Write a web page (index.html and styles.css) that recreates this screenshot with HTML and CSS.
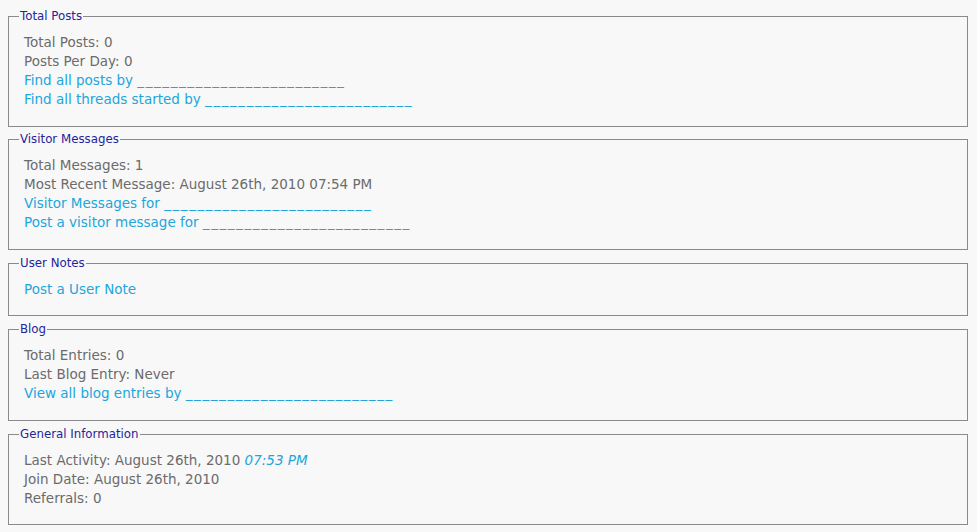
FILE: index.html
```html
<!DOCTYPE html>
<html>
<head>
<meta charset="utf-8">
<link rel="stylesheet" href="styles.css">
</head>
<body>
<div class="profile">
  <fieldset class="block">
    <legend>Total Posts</legend>
    <ul class="stats">
      <li><span class="label">Total Posts:</span> 0</li>
      <li><span class="label">Posts Per Day:</span> 0</li>
      <li><a href="#">Find all posts by <span class="blank">_________________________</span></a></li>
      <li><a href="#">Find all threads started by <span class="blank">_________________________</span></a></li>
    </ul>
  </fieldset>
  <fieldset class="block">
    <legend>Visitor Messages</legend>
    <ul class="stats">
      <li><span class="label">Total Messages:</span> 1</li>
      <li><span class="label">Most Recent Message:</span> August 26th, 2010 07:54 PM</li>
      <li><a href="#">Visitor Messages for <span class="blank">_________________________</span></a></li>
      <li><a href="#">Post a visitor message for <span class="blank">_________________________</span></a></li>
    </ul>
  </fieldset>
  <fieldset class="block">
    <legend>User Notes</legend>
    <ul class="stats">
      <li><a href="#">Post a User Note</a></li>
    </ul>
  </fieldset>
  <fieldset class="block">
    <legend>Blog</legend>
    <ul class="stats">
      <li><span class="label">Total Entries:</span> 0</li>
      <li><span class="label">Last Blog Entry:</span> Never</li>
      <li><a href="#">View all blog entries by <span class="blank">_________________________</span></a></li>
    </ul>
  </fieldset>
  <fieldset class="block">
    <legend>General Information</legend>
    <ul class="stats">
      <li><span class="label">Last Activity:</span> August 26th, 2010 <span class="time">07:53 PM</span></li>
      <li><span class="label">Join Date:</span> August 26th, 2010</li>
      <li><span class="label">Referrals:</span> 0</li>
    </ul>
  </fieldset>
</div>
</body>
</html>
```
FILE: styles.css
```css
html, body {
  margin: 0;
  padding: 0;
  background: #f8f8f8;
}
body {
  font-family: "DejaVu Sans", Verdana, sans-serif;
  font-size: 13.5px;
  color: #6b6b6b;
}
.profile {
  padding: 10px 9px 0 8px;
  display: flex;
  flex-direction: column;
  gap: 6.8px;
}
.block {
  margin: 0;
  border: 1px solid #8a8a8a;
  padding: 0 10px 16.6px 10px;
  min-width: 0;
}
.block legend {
  font-size: 11.8px;
  line-height: 13px;
  color: #24249c;
  padding: 0 1px;
}
.stats {
  list-style: none;
  margin: 10px 0 0 0;
  padding: 0 0 0 5px;
}
.stats li {
  line-height: 19px;
  height: 19px;
  white-space: nowrap;
}
.stats a {
  color: #21a6dc;
  text-decoration: none;
}
.blank {
  letter-spacing: 1.57px;
}
.time {
  color: #21a6dc;
  font-style: italic;
}
```
